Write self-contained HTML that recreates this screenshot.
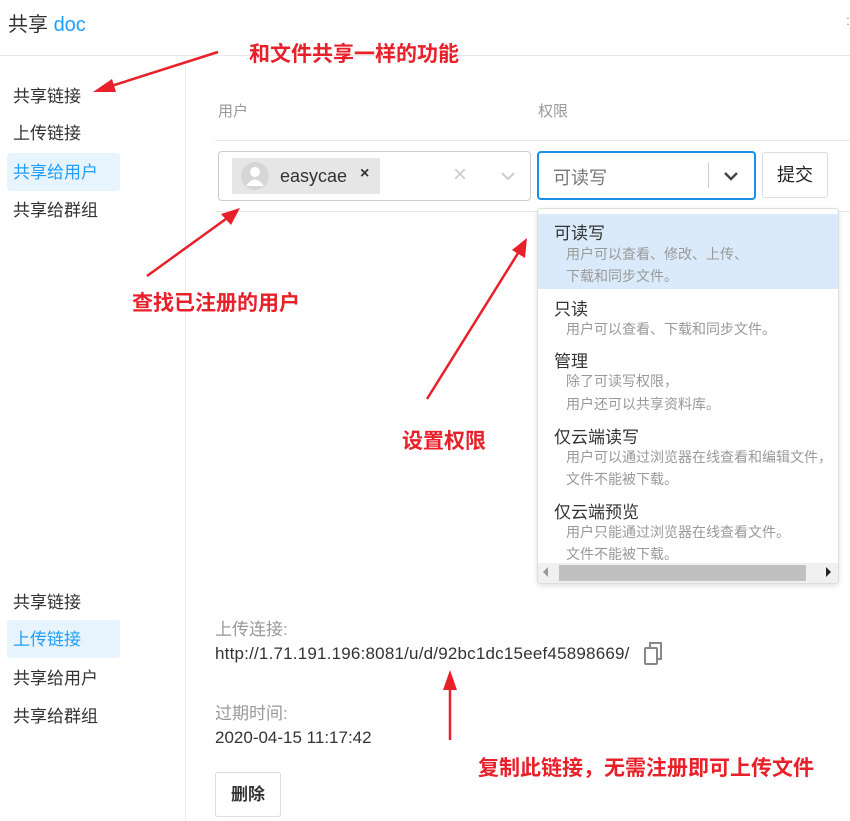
<!DOCTYPE html>
<html><head><meta charset="utf-8"><style>
*{margin:0;padding:0;box-sizing:border-box}
body{width:850px;height:821px;position:relative;overflow:hidden;background:#fff;font-family:"Liberation Sans","Noto Sans CJK SC",sans-serif;color:#333}
.a{position:absolute;white-space:nowrap}
.nav{position:absolute;left:7px;width:113px;height:38px;line-height:40px;padding-left:6px;font-size:17px;color:#333}
.on{background:#e8f4fd;color:#1e9fff;border-radius:3px}
.red{position:absolute;color:#e8202a;font-weight:bold;white-space:nowrap;font-size:21px}
.t{position:absolute;left:554px;font-size:17px;color:#333}
.d{position:absolute;left:566px;font-size:14px;color:#999}
</style></head><body>
<div class="a" style="left:8px;top:8px;font-size:20px">共享 <span style="color:#1e9fff">doc</span></div>
<div class="a" style="left:846px;top:12px;font-size:14px;color:#999">:</div>
<div class="a" style="left:0;top:55px;width:850px;height:1px;background:#e8e8e8"></div>
<div class="a" style="left:185px;top:56px;width:1px;height:765px;background:#eee"></div>

<div class="nav" style="top:77px">共享链接</div>
<div class="nav" style="top:114px">上传链接</div>
<div class="nav on" style="top:153px">共享给用户</div>
<div class="nav" style="top:191px">共享给群组</div>

<div class="a" style="left:218px;top:100px;font-size:15px;color:#999">用户</div>
<div class="a" style="left:538px;top:100px;font-size:15px;color:#999">权限</div>
<div class="a" style="left:215px;top:140px;width:635px;height:1px;background:#e6e6e6"></div>
<div class="a" style="left:215px;top:211px;width:635px;height:1px;background:#e6e6e6"></div>

<div class="a" style="left:218px;top:151px;width:313px;height:50px;border:1px solid #ccc;border-radius:4px"></div>
<div class="a" style="left:232px;top:158px;width:148px;height:36px;background:#e6e6e6;border-radius:2px"></div>
<svg class="a" style="left:240px;top:161px" width="30" height="30"><circle cx="15" cy="15" r="14" fill="#d6d6d6"/><circle cx="15" cy="11" r="5" fill="#fff"/><path d="M6 25 Q15 12 24 25 Z" fill="#fff"/></svg>
<div class="a" style="left:280px;top:166px;font-size:18px;color:#333">easycae</div>
<div class="a" style="left:360px;top:165px;font-size:16px;font-weight:bold;color:#333">×</div>
<div class="a" style="left:453px;top:161px;font-size:24px;color:#ccc">×</div>
<svg class="a" style="left:500px;top:170px" width="16" height="12"><path d="M2 3 L8 9 L14 3" stroke="#ccc" stroke-width="2" fill="none"/></svg>

<div class="a" style="left:537px;top:151px;width:219px;height:49px;border:2px solid #1a8fe8;border-radius:4px"></div>
<div class="a" style="left:553px;top:164px;font-size:18px;color:#777">可读写</div>
<div class="a" style="left:708px;top:162px;width:1px;height:26px;background:#ccc"></div>
<svg class="a" style="left:723px;top:170px" width="16" height="12"><path d="M2 3 L8 9 L14 3" stroke="#444" stroke-width="2.4" fill="none"/></svg>
<div class="a" style="left:762px;top:152px;width:66px;height:46px;border:1px solid #ddd;border-radius:3px;text-align:center;line-height:44px;font-size:18px;color:#222">提交</div>

<div class="a" style="left:537px;top:208px;width:302px;height:376px;border:1px solid #ddd;border-radius:4px;box-shadow:0 2px 6px rgba(0,0,0,.12);background:#fff;overflow:hidden">
<div style="position:absolute;left:0;top:5px;width:302px;height:75px;background:#dbeafa"></div>
<div style="position:absolute;left:0;top:354px;width:302px;height:20px;background:#f0f0f0"></div>
<div style="position:absolute;left:21px;top:356px;width:247px;height:16px;background:#c0c0c0"></div>
<div style="position:absolute;left:5px;top:358px;width:0;height:0;border:5px solid transparent;border-right-color:#999;border-left:0"></div>
<div style="position:absolute;left:288px;top:358px;width:0;height:0;border:5px solid transparent;border-left-color:#222;border-right:0"></div>
</div>
<div class="t" style="top:219px">可读写</div>
<div class="d" style="top:244px">用户可以查看、修改、上传、</div>
<div class="d" style="top:266px">下载和同步文件。</div>
<div class="t" style="top:295px">只读</div>
<div class="d" style="top:319px">用户可以查看、下载和同步文件。</div>
<div class="t" style="top:347px">管理</div>
<div class="d" style="top:371px">除了可读写权限，</div>
<div class="d" style="top:394px">用户还可以共享资料库。</div>
<div class="t" style="top:423px">仅云端读写</div>
<div class="d" style="top:447px;width:272px;overflow:hidden">用户可以通过浏览器在线查看和编辑文件，</div>
<div class="d" style="top:469px">文件不能被下载。</div>
<div class="t" style="top:498px">仅云端预览</div>
<div class="d" style="top:522px">用户只能通过浏览器在线查看文件。</div>
<div class="d" style="top:544px">文件不能被下载。</div>

<div class="nav" style="top:583px">共享链接</div>
<div class="nav on" style="top:620px">上传链接</div>
<div class="nav" style="top:659px">共享给用户</div>
<div class="nav" style="top:697px">共享给群组</div>

<div class="a" style="left:215px;top:615px;font-size:17px;color:#999">上传连接:</div>
<div class="a" style="left:215px;top:644px;font-size:17px;color:#333;letter-spacing:0.2px">http://1.71.191.196:8081/u/d/92bc1dc15eef45898669/</div>
<svg class="a" style="left:642px;top:640px" width="24" height="28"><rect x="3" y="8" width="12" height="16" rx="1" fill="none" stroke="#888" stroke-width="2"/><path d="M8 7 V3 H19 V19 H16" fill="none" stroke="#888" stroke-width="2"/></svg>
<div class="a" style="left:215px;top:699px;font-size:17px;color:#999">过期时间:</div>
<div class="a" style="left:215px;top:728px;font-size:17px;color:#333">2020-04-15 11:17:42</div>
<div class="a" style="left:215px;top:772px;width:66px;height:45px;border:1px solid #ddd;border-radius:3px;text-align:center;line-height:43px;font-size:17px;font-weight:bold;color:#333">删除</div>

<div class="red" style="left:249px;top:38px">和文件共享一样的功能</div>
<div class="red" style="left:132px;top:287px">查找已注册的用户</div>
<div class="red" style="left:402px;top:425px">设置权限</div>
<div class="red" style="left:478px;top:752px">复制此链接，无需注册即可上传文件</div>

<svg class="a" style="left:0;top:0" width="850" height="821">
<g stroke="#e8202a" stroke-width="2.5" fill="#e8202a">
<line x1="218" y1="52" x2="105" y2="88"/><polygon points="93,92 112,79 116,92" stroke="none"/>
<line x1="147" y1="276" x2="230" y2="216"/><polygon points="240,208 221,214 231,225" stroke="none"/>
<line x1="427" y1="399" x2="520" y2="250"/><polygon points="527,238 512,250 525,258" stroke="none"/>
<line x1="450" y1="740" x2="450" y2="685"/><polygon points="450,670 443,690 457,690" stroke="none"/>
</g></svg>
</body></html>
